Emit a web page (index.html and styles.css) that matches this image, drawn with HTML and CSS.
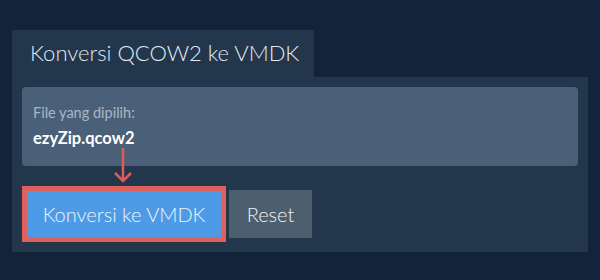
FILE: index.html
```html
<!DOCTYPE html>
<html lang="id">
<head>
<meta charset="utf-8">
<title>Konversi QCOW2 ke VMDK</title>
<link rel="stylesheet" href="styles.css">
</head>
<body>
<div class="page">
  <div class="tab">Konversi QCOW2 ke VMDK</div>
  <div class="panel">
    <div class="file-box">
      <div class="file-label">File yang dipilih:</div>
      <div class="file-name">ezyZip.qcow2</div>
    </div>
    <div class="actions">
      <div class="highlight">
        <button class="btn btn-primary">Konversi ke VMDK</button>
        <svg class="arrow" width="20" height="36" viewBox="0 0 20 36">
          <path d="M10 0 V33 M2 25 L10 33 L18 25" fill="none" stroke="#e05b57" stroke-width="2.5"/>
        </svg>
      </div>
      <button class="btn btn-secondary">Reset</button>
    </div>
  </div>
</div>
</body>
</html>
```

FILE: styles.css
```css
* { box-sizing: border-box; }
html, body { margin: 0; padding: 0; }
body {
  background: #12233a;
  font-family: Lato, "Open Sans", sans-serif;
  width: 600px;
  height: 280px;
  overflow: hidden;
}
.page {
  padding: 30px 12px 0 12px;
}
.tab {
  width: 302px;
  height: 47px;
  background: #22364c;
  color: #e3e9f0;
  font-size: 22px;
  font-weight: 300;
  line-height: 45px;
  padding-left: 18px;
}
.panel {
  background: #22364c;
  height: 175px;
  padding: 10px;
}
.file-box {
  background: #4a6078;
  border-radius: 4px;
  height: 79px;
  padding: 16px 11px 0 11px;
}
.file-label {
  color: #aab7c5;
  font-size: 14.5px;
  line-height: 20px;
}
.file-name {
  color: #ffffff;
  font-weight: 700;
  font-size: 16.5px;
  line-height: 22px;
  margin-top: 4px;
}
.actions {
  display: flex;
  align-items: center;
  gap: 3px;
  margin-top: 20px;
}
.highlight {
  position: relative;
  border: 5px solid #e0605b;
  width: 204px;
  height: 56px;
}
.arrow {
  position: absolute;
  left: 86px;
  top: -43px;
}
.btn {
  font-family: Lato, "Open Sans", sans-serif;
  font-weight: 300;
  border: none;
  color: #f0f4f8;
  font-size: 20px;
  padding: 0;
  cursor: pointer;
}
.btn-primary {
  background: #4d9be6;
  width: 194px;
  height: 46px;
  display: block;
}
.btn-secondary {
  background: #4d5e6f;
  width: 83px;
  height: 48px;
}
```
